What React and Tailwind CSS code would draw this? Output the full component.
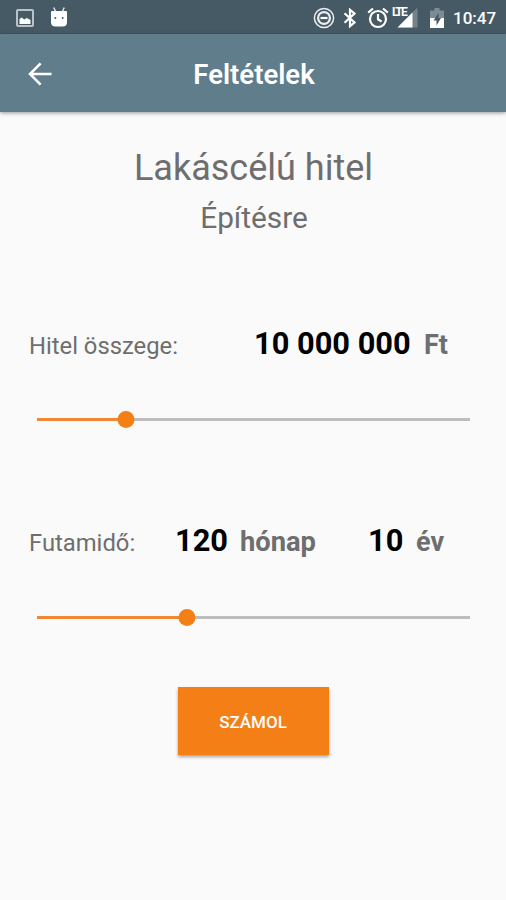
import React from 'react';

function ImageIcon() {
  return (
    <svg viewBox="0 0 18 18" className="h-[18px] w-[18px]">
      <rect x="1" y="1" width="16" height="16" rx="1" fill="none" stroke="#b8c2c7" strokeWidth="2" />
      <path d="M3.5 15V10l2.2-1.5 2.5 2L10.7 9l3.8 2V15z" fill="#fff" />
    </svg>
  );
}

function RobotIcon() {
  return (
    <svg viewBox="0 0 18 20" className="h-5 w-[18px]">
      <path d="M3.8 0.5l1.7 4M14.2 0.5l-1.7 4" stroke="#dfe5e8" strokeWidth="1.5" />
      <path d="M1 5Q1 4 2 4H16Q17 4 17 5V15Q17 19.5 12.5 19.5H5.5Q1 19.5 1 15z" fill="#fff" />
      <circle cx="5.3" cy="11" r="1" fill="#455a64" />
      <circle cx="12.7" cy="11" r="1" fill="#455a64" />
    </svg>
  );
}

function DndIcon() {
  return (
    <svg viewBox="0 0 22 22" className="h-[22px] w-[22px]">
      <circle cx="11" cy="11" r="9.6" fill="none" stroke="#eceff1" strokeWidth="1.5" />
      <circle cx="11" cy="11" r="7" fill="#eceff1" />
      <circle cx="11" cy="11" r="4.8" fill="#455a64" />
      <path d="M7.5 11h7" stroke="#fff" strokeWidth="2.2" />
    </svg>
  );
}

function BluetoothIcon() {
  return (
    <svg viewBox="0 0 14 20" className="h-5 w-3.5" fill="none" stroke="#fff" strokeWidth="2.2">
      <path d="M1.5 5.2L11.5 14.5L7 18.2V1.8L11.5 5.5L1.5 14.8" />
    </svg>
  );
}

function AlarmIcon() {
  return (
    <svg viewBox="0 0 22 22" className="h-[22px] w-[22px]" fill="none" stroke="#fff" strokeWidth="2.2">
      <circle cx="11" cy="12" r="8" />
      <path d="M11 7v5.3l3.6 2.3M1.2 5.6L6 1.5M20.8 5.6L16 1.5" />
    </svg>
  );
}

function SignalIcon() {
  return (
    <div className="relative h-[22px] w-[26px]">
      <svg viewBox="0 0 26 22" className="h-[22px] w-[26px]">
        <path d="M5.5 21.5L25.5 1.5V21.5z" fill="#74838a" />
        <path d="M5.5 21.5L20.5 6.5V21.5z" fill="#fff" />
      </svg>
      <span className="absolute top-0 left-0 text-[12px] leading-[12px] font-bold tracking-[-1.8px] text-white">
        LTE
      </span>
    </div>
  );
}

function BatteryIcon() {
  return (
    <svg viewBox="0 0 14 20" className="h-5 w-3.5">
      <path d="M0 2.5h4.5V0h5v2.5H14V10H0z" fill="#7d8b92" />
      <path d="M0 10h14v10H0z" fill="#fff" />
      <path d="M8.5 5L3.5 12.5H6.5V17.5L11 10H8.5z" fill="#455a64" />
    </svg>
  );
}

function StatusBar() {
  return (
    <div className="flex h-[34px] items-center bg-[#455a64] pt-px pr-[10px] pl-4">
      <ImageIcon />
      <div className="ml-4 -mt-0.5">
        <RobotIcon />
      </div>
      <div className="ml-auto flex items-center">
        <DndIcon />
        <div className="ml-[8px]">
          <BluetoothIcon />
        </div>
        <div className="ml-[10px]">
          <AlarmIcon />
        </div>
        <div className="ml-[3px] -mt-0.5">
          <SignalIcon />
        </div>
        <div className="ml-[12px]">
          <BatteryIcon />
        </div>
        <span className="ml-[9px] w-[43px] pt-0.5 text-[17px] font-medium whitespace-nowrap text-white">10:47</span>
      </div>
    </div>
  );
}

function Slider({ value }) {
  return (
    <div className="relative mr-9 ml-[37px] flex h-[17px] items-center">
      <div className="h-[3px] w-full bg-[#bdbdbd]">
        <div className="h-full bg-[#f08636]" style={{ width: `${value}%` }} />
      </div>
      <div
        className="absolute top-0 h-[17px] w-[17px] -translate-x-1/2 rounded-full bg-[#f57f17]"
        style={{ left: `${value}%` }}
      />
    </div>
  );
}

export default function App() {
  return (
    <div className="h-[900px] w-[506px] overflow-hidden bg-[#fafafa] font-['Roboto',sans-serif] text-[#6e6e6e]">
      <StatusBar />
      <header className="grid h-[78px] grid-cols-[80px_1fr_80px] items-center bg-[#607d8b] shadow-[0_1px_4px_rgba(0,0,0,0.4)]">
        <svg viewBox="0 0 24 24" className="mt-px ml-7 h-6 w-6" fill="none" stroke="#fff" strokeWidth="2.6">
          <path d="M12.6 1.3L2 12L12.6 22.7M2 12h21.5" />
        </svg>
        <h1 className="pt-1 pl-0.5 text-center text-[27.5px] font-semibold text-white">Feltételek</h1>
      </header>

      <main>
        <h2 className="mt-[34px] pl-px text-center text-[36px] leading-[44px]">Lakáscélú hitel</h2>
        <p className="mt-[10px] pl-0.5 text-center text-[29.8px] leading-[36px]">Építésre</p>

        <div className="mt-[88px] flex h-10 items-baseline pl-[29px] whitespace-nowrap">
          <span className="w-[225px] text-[23.8px]">Hitel összege:</span>
          <span className="w-[170px] text-[30.8px] leading-10 font-bold text-black">10 000 000</span>
          <span className="text-[27px] font-bold">Ft</span>
        </div>
        <div className="mt-[47px]">
          <Slider value={20.5} />
        </div>

        <div className="mt-[90px] flex h-10 items-baseline pl-[29px] whitespace-nowrap">
          <span className="w-[146px] text-[23.8px]">Futamidő:</span>
          <span className="w-[65px] text-[30.8px] leading-10 font-bold text-black">120</span>
          <span className="w-[128px] text-[27.3px] font-bold">hónap</span>
          <span className="w-[48px] text-[30.8px] font-bold text-black">10</span>
          <span className="text-[27px] font-bold">év</span>
        </div>
        <div className="mt-[51px]">
          <Slider value={34.6} />
        </div>

        <button className="mx-auto mt-[61px] block h-[68px] w-[151px] bg-[#f57f17] pt-1 text-[17px] font-medium text-white shadow-[0_2px_3px_rgba(0,0,0,0.35)]">
          SZÁMOL
        </button>
      </main>
    </div>
  );
}
